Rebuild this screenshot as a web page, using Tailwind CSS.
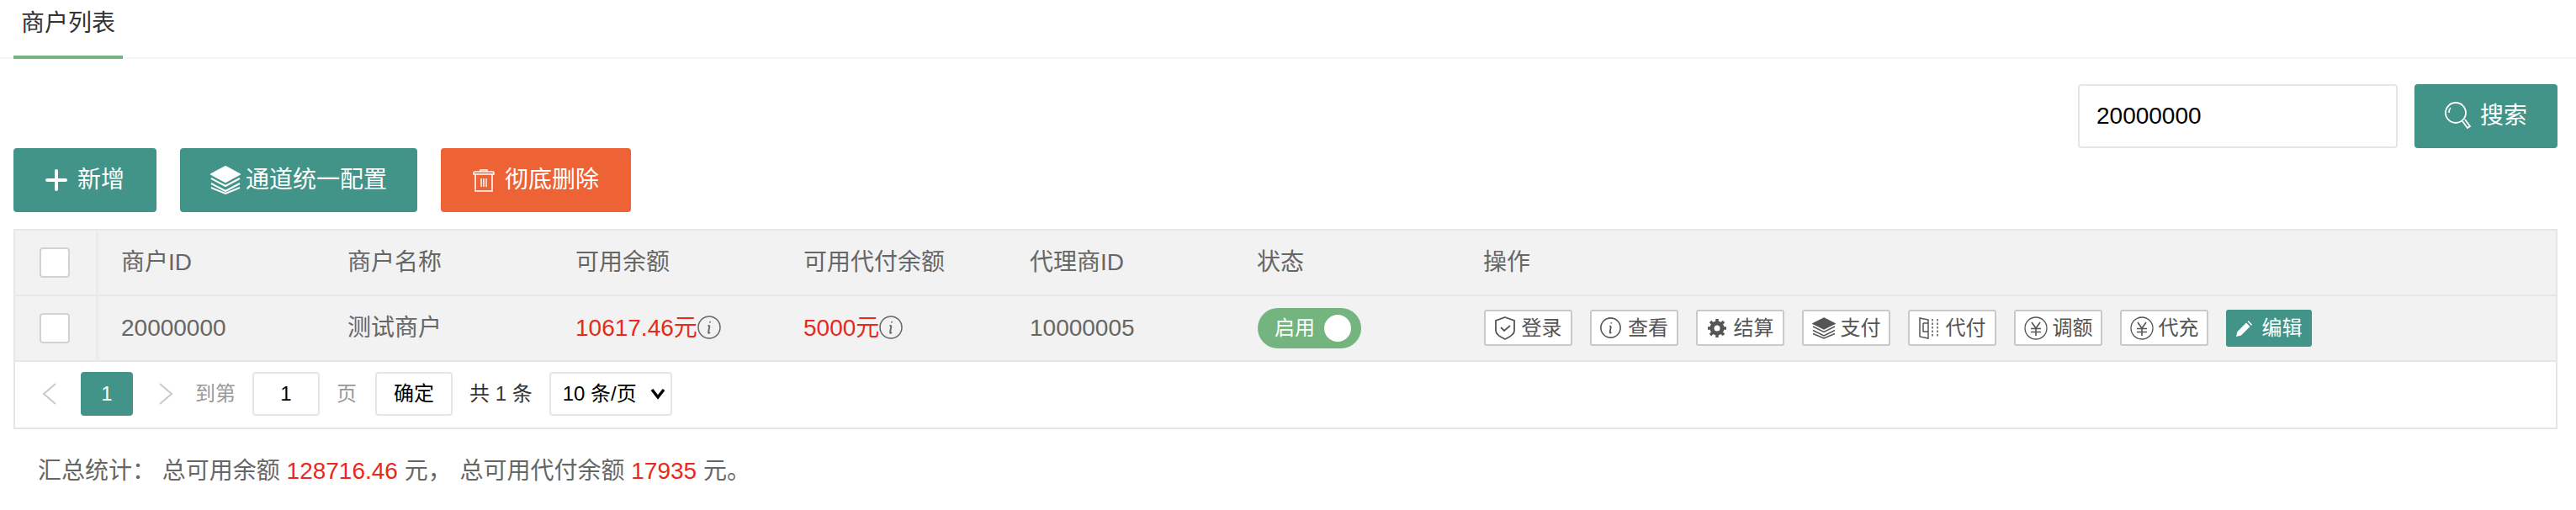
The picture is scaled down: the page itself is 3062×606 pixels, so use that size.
<!DOCTYPE html>
<html lang="zh">
<head>
<meta charset="utf-8">
<title>商户列表</title>
<script src="https://cdn.jsdelivr.net/npm/@tailwindcss/browser@4"></script>
</head>
<body class="bg-white text-[28px] text-[#666] font-['Liberation_Sans','Noto_Sans_CJK_SC',sans-serif]">
<div class="w-[3062px] h-[606px] overflow-hidden">

  <!-- tab -->
  <div class="h-[70px] px-[16px] border-b-2 border-[#f6f6f6]">
    <div class="w-[130px] h-[70px] border-b-4 border-[#74b47f] text-center leading-[56px] text-[#333]">商户列表</div>
  </div>

  <!-- search -->
  <div class="flex justify-end gap-[20px] pt-[30px] pr-[22px]">
    <input value="20000000" class="w-[380px] h-[76px] px-[20px] border-2 border-[#e6e6e6] rounded-[4px] text-[28px] text-black outline-none">
    <button class="flex items-center justify-center gap-[10px] w-[170px] h-[76px] rounded-[4px] bg-[#429488] text-white">
      <svg class="w-[32px] h-[36px]" viewBox="0 0 32 36" fill="none" stroke="#fff" stroke-width="1.800"><circle cx="13" cy="14" r="12"/><path d="M5 14a8 8 0 0 1 2-6" stroke-width="1.500"/><path d="M21 24l6 8 3-2-6-8"/></svg>
      搜索
    </button>
  </div>

  <!-- toolbar -->
  <div class="flex gap-[28px] pl-[16px]">
    <button class="flex items-center justify-center gap-[12px] w-[170px] h-[76px] rounded-[4px] bg-[#429488] text-white">
      <svg class="w-[26px] h-[26px]" viewBox="0 0 26 26" fill="none" stroke="#fff" stroke-width="4" stroke-linecap="round"><path d="M13 2v22M2 13h22"/></svg>
      新增
    </button>
    <button class="flex items-center justify-center gap-[6px] w-[282px] h-[76px] rounded-[4px] bg-[#429488] text-white">
      <svg class="w-[36px] h-[34px]" viewBox="0 0 36 34" fill="none" stroke="#fff" stroke-width="2"><path d="M18 1L35 10 18 19 1 10z" fill="#fff"/><path d="M1 15l17 9 17-9M1 21l17 9 17-9M1 26l17 7 17-7"/></svg>
      通道统一配置
    </button>
    <button class="flex items-center justify-center gap-[12px] w-[226px] h-[76px] rounded-[4px] bg-[#ee6336] text-white">
      <svg class="w-[26px] h-[28px]" viewBox="0 0 26 28" fill="none" stroke="#fff" stroke-width="1.500"><path d="M1 7V5.500Q1 4 3 4h20q2 0 2 1.500V7zM9 4V2h8v2M3 7v20h20V7M10 12v10M13 12v10M16 12v10"/></svg>
      彻底删除
    </button>
  </div>

  <!-- table -->
  <div class="w-[3024px] h-[238px] ml-[16px] mt-[20px] border-2 border-[#e6e6e6]">
    <div class="grid grid-cols-[98px_269px_271px_271px_269px_270px_269px_1fr] h-[78px] items-center border-b-2 border-[#e6e6e6] bg-[#f2f2f2]">
      <div class="flex h-full items-center justify-center border-r-2 border-[#ebebeb] shadow-[2px_0_3px_#ececec]"><span class="w-[36px] h-[36px] -ml-[2px] rounded-[4px] border-2 border-[#d2d2d2] bg-white"></span></div>
      <div class="pl-[28px]">商户ID</div>
      <div class="pl-[28px]">商户名称</div>
      <div class="pl-[28px]">可用余额</div>
      <div class="pl-[28px]">可用代付余额</div>
      <div class="pl-[28px]">代理商ID</div>
      <div class="pl-[28px]">状态</div>
      <div class="pl-[28px]">操作</div>
    </div>
    <div class="grid grid-cols-[98px_269px_271px_271px_269px_270px_269px_1fr] h-[78px] items-center border-b-2 border-[#e6e6e6] bg-[#f2f2f2]">
      <div class="flex h-full items-center justify-center border-r-2 border-[#ebebeb] shadow-[2px_0_3px_#ececec]"><span class="w-[36px] h-[36px] -ml-[2px] rounded-[4px] border-2 border-[#d2d2d2] bg-white"></span></div>
      <div class="pl-[28px]">20000000</div>
      <div class="pl-[28px]">测试商户</div>
      <div class="flex items-center pl-[28px] text-[#e8291c]">10617.46元
        <svg class="w-[28px] h-[28px] -mt-[2px]" viewBox="0 0 28 28" fill="none" stroke="#666"><circle cx="14" cy="14" r="13" stroke-width="1.500"/><path d="M15 7v1.500M14.500 12l-1.500 8q0 1.500 2 0M12.500 12h2" stroke-width="1.800"/></svg>
      </div>
      <div class="flex items-center pl-[28px] text-[#e8291c]">5000元
        <svg class="w-[28px] h-[28px] -mt-[2px]" viewBox="0 0 28 28" fill="none" stroke="#666"><circle cx="14" cy="14" r="13" stroke-width="1.500"/><path d="M15 7v1.500M14.500 12l-1.500 8q0 1.500 2 0M12.500 12h2" stroke-width="1.800"/></svg>
      </div>
      <div class="pl-[28px]">10000005</div>
      <div class="pl-[29px]">
        <div class="flex items-center justify-between w-[123px] h-[48px] pl-[20px] pr-[12px] rounded-full bg-[#74b47f] text-[24px] text-white">启用<span class="w-[32px] h-[32px] rounded-full bg-white"></span></div>
      </div>
      <div class="flex gap-[21px] pl-[29px] text-[24px] text-[#555]">
        <button class="flex items-center justify-center gap-[8px] w-[105px] h-[43px] rounded-[3px] border-2 border-[#c9c9c9] bg-white">
          <svg class="w-[24px] h-[28px]" viewBox="0 0 24 28" fill="none" stroke="#555" stroke-width="1.800"><path d="M12 1l11 4v12q0 5-11 10Q1 22 1 17V5z"/><path d="M7 13l4 4 7-6"/></svg>登录
        </button>
        <button class="flex items-center justify-center gap-[8px] w-[105px] h-[43px] rounded-[3px] border-2 border-[#c9c9c9] bg-white">
          <svg class="w-[25px] h-[25px]" viewBox="0 0 28 28" fill="none" stroke="#555"><circle cx="14" cy="14" r="13" stroke-width="1.800"/><path d="M15 7v1.500M14.500 12l-1.500 8q0 1.500 2 0M12.500 12h2" stroke-width="2"/></svg>查看
        </button>
        <button class="flex items-center justify-center gap-[8px] w-[105px] h-[43px] rounded-[3px] border-2 border-[#c9c9c9] bg-white">
          <svg class="w-[24px] h-[24px]" viewBox="0 0 24 24" fill="none" stroke="#555"><circle cx="12" cy="12" r="6" stroke-width="5"/><path d="M12 1v5M12 18v5M1 12h5M18 12h5M4 4l4 4M16 16l4 4M20 4l-4 4M8 16l-4 4" stroke-width="3.500"/></svg>结算
        </button>
        <button class="flex items-center justify-center gap-[6px] w-[105px] h-[43px] rounded-[3px] border-2 border-[#c9c9c9] bg-white">
          <svg class="w-[28px] h-[26px]" viewBox="0 0 28 26" fill="none" stroke="#555" stroke-width="1.500"><path d="M14 1l13 6.500L14 14 1 7.500z" fill="#555"/><path d="M1 11l13 6.500L27 11M1 15.500L14 22l13-6.500M1 19.500L14 25l13-5.500"/></svg>支付
        </button>
        <button class="flex items-center justify-center gap-[8px] w-[105px] h-[43px] rounded-[3px] border-2 border-[#c9c9c9] bg-white">
          <svg class="w-[24px] h-[26px]" viewBox="0 0 24 26" fill="none" stroke="#555" stroke-width="1.500"><path d="M11 3L1 1v22l10 2zM5 7h6M5 7v10h6"/><path d="M16 2v22M22 2v22" stroke-dasharray="2.500 2"/></svg>代付
        </button>
        <button class="flex items-center justify-center gap-[6px] w-[105px] h-[43px] rounded-[3px] border-2 border-[#c9c9c9] bg-white">
          <svg class="w-[28px] h-[28px]" viewBox="0 0 28 28" fill="none" stroke="#555" stroke-width="1.300"><circle cx="14" cy="14" r="13"/><path d="M9 7l5 7 5-7M8 14.500h12M8 18.500h12M14 14v9" stroke-width="1.600"/></svg>调额
        </button>
        <button class="flex items-center justify-center gap-[6px] w-[105px] h-[43px] rounded-[3px] border-2 border-[#c9c9c9] bg-white">
          <svg class="w-[28px] h-[28px]" viewBox="0 0 28 28" fill="none" stroke="#555" stroke-width="1.300"><circle cx="14" cy="14" r="13"/><path d="M9 7l5 7 5-7M8 14.500h12M8 18.500h12M14 14v9" stroke-width="1.600"/></svg>代充
        </button>
        <button class="flex items-center justify-center gap-[12px] w-[102px] h-[44px] rounded-[3px] bg-[#429488] text-white">
          <svg class="w-[19px] h-[19px]" viewBox="0 0 19 19" fill="#fff"><path d="M0 19l1.500-6L12 2.500l4.500 4.500L6 17.500zM13.500 1l1-1 4.500 4.500-1 1.500z"/></svg>编辑
        </button>
      </div>
    </div>

    <!-- pagination -->
    <div class="flex items-center h-[76px] text-[24px]">
      <svg class="w-[18px] h-[26px] ml-[32px]" viewBox="0 0 18 26" fill="none" stroke="#c9c9c9" stroke-width="2"><path d="M16 1L2 13l14 12"/></svg>
      <span class="flex items-center justify-center w-[62px] h-[52px] ml-[28px] rounded-[4px] bg-[#429488] text-white">1</span>
      <svg class="w-[18px] h-[26px] ml-[30px]" viewBox="0 0 18 26" fill="none" stroke="#c9c9c9" stroke-width="2"><path d="M2 1l14 12L2 25"/></svg>
      <span class="ml-[26px] text-[#999]">到第</span>
      <input value="1" class="w-[80px] h-[52px] ml-[20px] rounded-[4px] border-2 border-[#e6e6e6] text-center text-[24px] text-black">
      <span class="ml-[20px] text-[#999]">页</span>
      <button class="w-[92px] h-[52px] ml-[22px] rounded-[4px] border-2 border-[#e6e6e6] text-black">确定</button>
      <span class="ml-[20px] text-[#333]">共 1 条</span>
      <div class="relative ml-[20px] h-[52px]">
        <select class="w-[146px] h-[52px] appearance-none rounded-[4px] border-2 border-[#e6e6e6] pl-[14px] bg-white text-[24px] text-black"><option>10 条/页</option></select>
        <svg class="absolute right-[8px] top-[19px] w-[18px] h-[14px]" viewBox="0 0 18 14" fill="none" stroke="#000" stroke-width="3.500"><path d="M2 2l7 9 7-9"/></svg>
      </div>
    </div>
  </div>

  <!-- summary -->
  <p class="mt-[30px] pl-[45px] leading-[40px]">汇总统计： 总可用余额 <span class="text-[#e8291c]">128716.46</span> 元， <span class="ml-[2px]">总可用代付余额</span> <span class="text-[#e8291c]">17935</span> 元。</p>
</div>
</body>
</html>
